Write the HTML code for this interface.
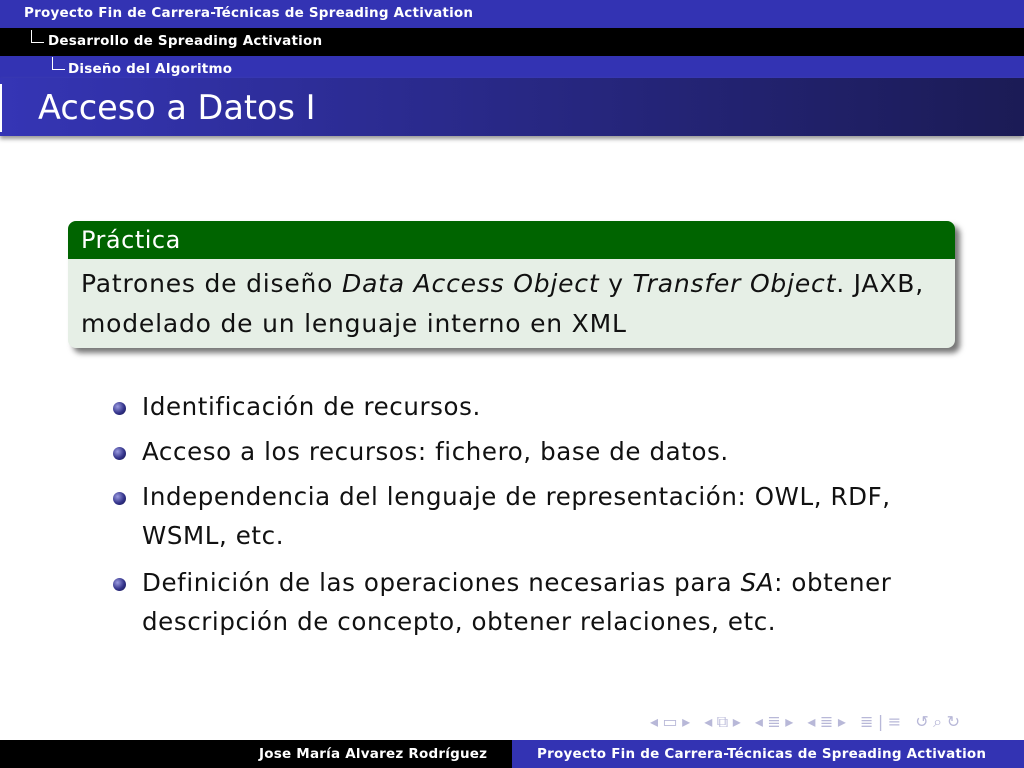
<!DOCTYPE html>
<html><head><meta charset="utf-8"><style>
body{margin:0;width:1024px;height:768px;overflow:hidden;background:#fff;font-family:"DejaVu Sans","Liberation Sans",sans-serif;position:relative}
.a{position:absolute;white-space:nowrap}
.hb{font-size:13.5px;font-weight:bold;color:#fff;letter-spacing:0.22px}
.t{font-size:24.5px;color:#111;letter-spacing:0.6px}
.b{font-size:25px;color:#111;letter-spacing:0.8px}
.dot{position:absolute;width:13px;height:13px;border-radius:50%;background:radial-gradient(circle at 35% 35%,#9a9ae0,#33338a 55%,#14144a)}
</style></head><body>
<div class="a" style="left:0;top:0;width:1024px;height:28px;background:#3333b3"></div>
<div class="a" style="left:0;top:28px;width:1024px;height:28px;background:#000"></div>
<div class="a" style="left:0;top:56px;width:1024px;height:22px;background:#3333b3"></div>
<div class="a" style="left:0;top:78px;width:1024px;height:58px;background:linear-gradient(90deg,#3535b5,#1b1b55);box-shadow:0 3px 4px #999"></div>
<div class="a" style="left:0;top:84px;width:2px;height:48px;background:#fff"></div>
<div class="a hb" style="left:24px;top:5px">Proyecto Fin de Carrera-Técnicas de Spreading Activation</div>
<div class="a" style="left:31px;top:30px;width:12px;height:12px;border-left:1px solid #fff;border-bottom:1px solid #fff"></div>
<div class="a hb" style="left:48px;top:33px">Desarrollo de Spreading Activation</div>
<div class="a" style="left:52px;top:57px;width:12px;height:12px;border-left:1px solid #fff;border-bottom:1px solid #fff"></div>
<div class="a hb" style="left:68px;top:61px">Diseño del Algoritmo</div>
<div class="a" style="left:38px;top:88px;font-size:33.5px;color:#fff">Acceso a Datos I</div>

<div class="a" style="left:68px;top:221px;width:887px;height:127px;border-radius:8px;box-shadow:5px 5px 6px #777;overflow:hidden;background:#e6efe6">
<div style="height:38px;background:#006400"></div></div>
<div class="a" style="left:81px;top:226px;font-size:24px;color:#fff;letter-spacing:0.5px">Práctica</div>
<div class="a b" style="left:81px;top:269px">Patrones de diseño <i>Data Access Object</i> y <i>Transfer Object</i>. JAXB,</div>
<div class="a b" style="left:81px;top:309px">modelado de un lenguaje interno en XML</div>

<div class="dot" style="left:113px;top:402px"></div>
<div class="a t" style="left:142px;top:392px">Identificación de recursos.</div>
<div class="dot" style="left:113px;top:447px"></div>
<div class="a t" style="left:142px;top:437px">Acceso a los recursos: fichero, base de datos.</div>
<div class="dot" style="left:113px;top:492px"></div>
<div class="a t" style="left:142px;top:482px">Independencia del lenguaje de representación: OWL, RDF,</div>
<div class="a t" style="left:142px;top:521px">WSML, etc.</div>
<div class="dot" style="left:113px;top:578px"></div>
<div class="a t" style="left:142px;top:568px">Definición de las operaciones necesarias para <i>SA</i>: obtener</div>
<div class="a t" style="left:142px;top:607px">descripción de concepto, obtener relaciones, etc.</div>

<div class="a" style="left:650px;top:712px;font-size:16px;color:#b8b8d8;letter-spacing:4.5px">◂▭▸ ◂⧉▸ ◂≣▸ ◂≣▸ ≣|≡ ↺⌕↻</div>
<div class="a" style="left:0;top:740px;width:512px;height:28px;background:#000"></div>
<div class="a" style="left:512px;top:740px;width:512px;height:28px;background:#3333b3"></div>
<div class="a hb" style="left:259px;top:746px">Jose María Alvarez Rodríguez</div>
<div class="a hb" style="left:537px;top:746px">Proyecto Fin de Carrera-Técnicas de Spreading Activation</div>
</body></html>
